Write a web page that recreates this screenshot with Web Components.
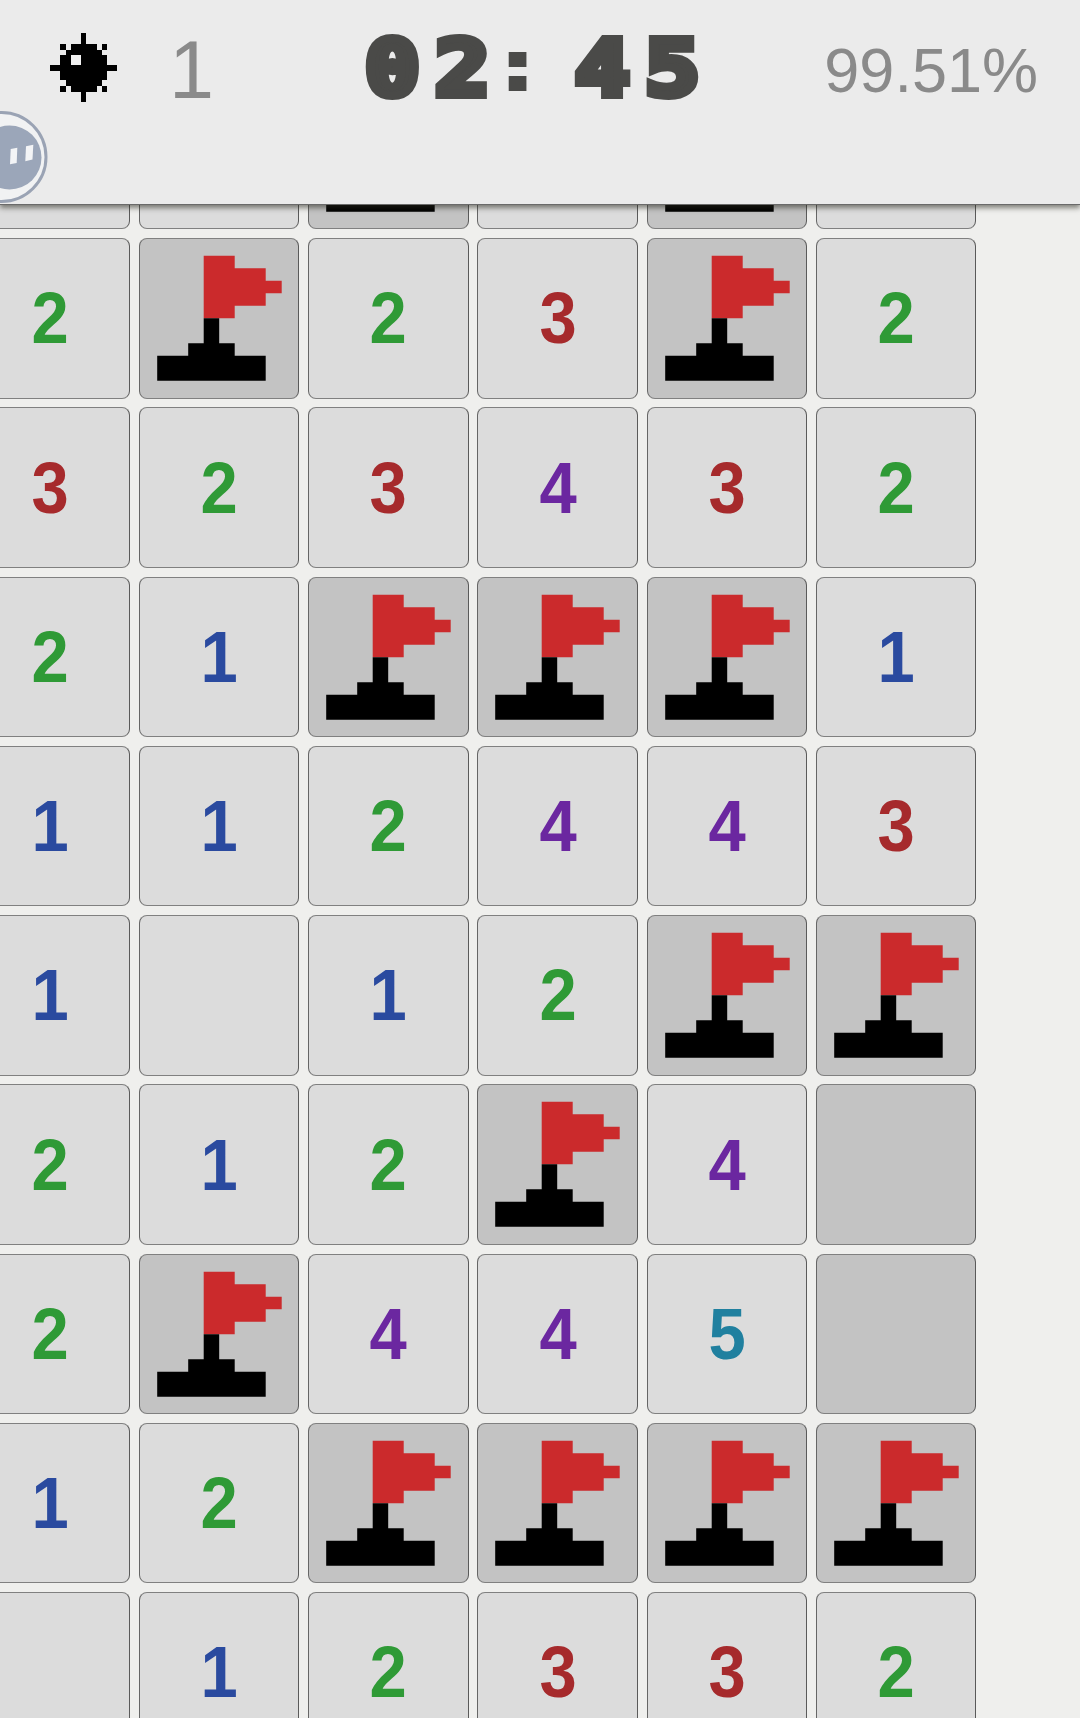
<!DOCTYPE html>
<html><head><meta charset="utf-8">
<style>
html,body{margin:0;padding:0;height:1718px;overflow:hidden;background:#efefed;font-family:"Liberation Sans",Arial,sans-serif}
</style></head>
<body>
<game-header></game-header>
<game-board rows="_ _ F _ F _|2 F 2 3 F 2|3 2 3 4 3 2|2 1 F F F 1|1 1 2 4 4 3|1 _ 1 2 F F|2 1 2 F 4 U|2 F 4 4 5 U|1 2 F F F F|_ 1 2 3 3 2"></game-board>
<script>
class MineIcon extends HTMLElement{
  constructor(){super();this.attachShadow({mode:'open'}).innerHTML=`<style>:host{display:block;width:90px;height:90px}svg{display:block}</style>
  <svg width="90" height="90" viewBox="0 0 90 90" shape-rendering="crispEdges" fill="#000">
  <rect x="41" y="8" width="5" height="69"/><rect x="10" y="40" width="67" height="6"/>
  <rect x="31" y="19" width="26" height="48"/><rect x="26" y="25" width="36" height="36"/><rect x="20" y="30" width="47" height="25"/>
  <rect x="20" y="19" width="6" height="6"/><rect x="62" y="19" width="5" height="6"/><rect x="20" y="61" width="6" height="6"/><rect x="62" y="61" width="5" height="6"/>
  <rect x="31" y="30" width="10" height="10" fill="#f2f2f2"/></svg>`;}
}
class BotAvatar extends HTMLElement{
  constructor(){super();this.attachShadow({mode:'open'}).innerHTML=`<style>:host{display:block;position:absolute;left:0;top:105px;width:60px;height:105px}svg{display:block}</style>
  <svg width="60" height="105" viewBox="0 0 60 105">
  <circle cx="1.5" cy="52" r="44.5" fill="#f1f2f3" stroke="#9aa3b4" stroke-width="3"/>
  <circle cx="9.5" cy="52.5" r="32" fill="#9ba6b9"/>
  <path d="M10.7 44 17.3 42.7 16.7 58 10 59.3Z" fill="#f3f4f6"/><path d="M26 41.2 33.3 39.8 32.5 54.5 25.3 56.2Z" fill="#f3f4f6"/></svg>`;}
}
class GameHeader extends HTMLElement{
  constructor(){super();this.attachShadow({mode:'open'}).innerHTML=`<style>
  :host{display:block;position:absolute;left:0;top:0;width:1080px;height:205px;box-sizing:border-box;background:#ebebeb;border-bottom:1px solid #6a6a6a;box-shadow:0 3px 5px rgba(40,40,30,.55);z-index:2}
  .row{display:flex;align-items:center;height:140px;padding:0 42px 0 40px;color:#8a8a8a}
  .count{font-size:81px;line-height:1;margin-left:39px}
  .timer{margin-left:151px;margin-top:-3px;width:350px;white-space:nowrap;font:700 77px/80px "DejaVu Sans Mono",monospace;letter-spacing:13px;color:#4a4a48;-webkit-text-stroke:8px #4a4a48;transform:scaleX(1.18);transform-origin:0 50%}
  .timer .c{font:700 64px/1 "Liberation Sans",sans-serif;letter-spacing:0;-webkit-text-stroke:6px #4a4a48;margin-right:38px;vertical-align:7px}
  .pct{margin-left:auto;font-size:63px;line-height:1}
  </style><div class="row"><mine-icon></mine-icon><span class="count">1</span><span class="timer">02<span class="c">:</span>45</span><span class="pct">99.51%</span></div><bot-avatar></bot-avatar>`;}
}
class FlagIcon extends HTMLElement{
  constructor(){super();this.attachShadow({mode:'open'}).innerHTML=`<style>:host{display:block;position:absolute;inset:0}svg{display:block}</style>
  <svg width="158" height="158" viewBox="-0.7 -0.5 158 158">
  <path fill="#cb2a2c" d="M63 16.3H94V28.8H125V41.3H141V53.8H125V66.3H94V78.8H63Z"/>
  <path fill="#000" d="M63 78.8H78.5V103.8H94V116.3H125V141.3H16.5V116.3H47.5V103.8H63Z"/></svg>`;}
}
class GameCell extends HTMLElement{
  static get observedAttributes(){return ['v']}
  constructor(){super();this.attachShadow({mode:'open'}).innerHTML=`<style>
  :host{display:flex;position:relative;align-items:center;justify-content:center;box-sizing:border-box;height:160.5px;background:#dcdcdc;border:1.5px solid;border-color:#808080 #5a5a5a #808080 #666;border-radius:8px;font:700 72px/1 "Liberation Sans",Arial,sans-serif}
  :host([v="F"]),:host([v="U"]){background:#c3c3c3}
  :host([v="1"]){color:#2a4a9f}:host([v="2"]){color:#2f9a36}:host([v="3"]){color:#a62a2c}:host([v="4"]){color:#6b27a0}:host([v="5"]){color:#20809f}
  .n{display:inline-block;transform:scaleX(.93)}
  </style><span class="n"><slot></slot></span>`;}
  attributeChangedCallback(){
    const v=this.getAttribute('v');
    this.textContent='';
    if(v==='F')this.shadowRoot.appendChild(document.createElement('flag-icon'));
    else if(/[1-8]/.test(v))this.textContent=v;
  }
}
class GameBoard extends HTMLElement{
  constructor(){super();this.attachShadow({mode:'open'}).innerHTML=`<style>
  :host{display:grid;grid-template-columns:repeat(6,160.5px);grid-auto-rows:160.5px;gap:8.75px;margin:68.75px 0 0 -30.4px;width:max-content}
  </style><slot></slot>`;}
  connectedCallback(){
    this.getAttribute('rows').split('|').forEach(r=>r.split(' ').forEach(v=>{
      const c=document.createElement('game-cell');c.setAttribute('v',v);this.appendChild(c);
    }));
  }
}
customElements.define('mine-icon',MineIcon);
customElements.define('bot-avatar',BotAvatar);
customElements.define('game-header',GameHeader);
customElements.define('flag-icon',FlagIcon);
customElements.define('game-cell',GameCell);
customElements.define('game-board',GameBoard);
</script>
</body></html>
